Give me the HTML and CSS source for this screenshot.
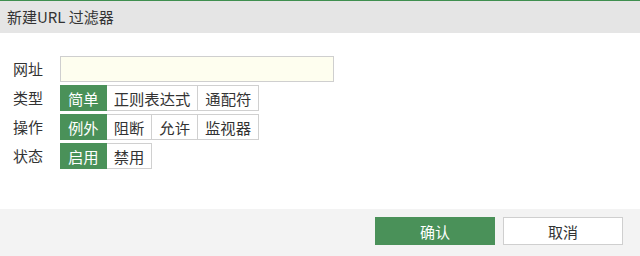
FILE: index.html
```html
<!DOCTYPE html>
<html lang="zh">
<head>
<meta charset="utf-8">
<link rel="stylesheet" href="styles.css">
</head>
<body>
<div class="dialog">
  <div class="header">新建URL 过滤器</div>
  <div class="body">
    <div class="row">
      <div class="label">网址</div>
      <input class="input" type="text">
    </div>
    <div class="row">
      <div class="label">类型</div>
      <div class="group">
        <span class="opt active">简单</span><span class="opt">正则表达式</span><span class="opt">通配符</span>
      </div>
    </div>
    <div class="row">
      <div class="label">操作</div>
      <div class="group">
        <span class="opt active">例外</span><span class="opt">阻断</span><span class="opt">允许</span><span class="opt">监视器</span>
      </div>
    </div>
    <div class="row">
      <div class="label">状态</div>
      <div class="group">
        <span class="opt active">启用</span><span class="opt">禁用</span>
      </div>
    </div>
  </div>
  <div class="footer">
    <button class="btn primary">确认</button>
    <button class="btn">取消</button>
  </div>
</div>
</body>
</html>
```
FILE: styles.css
```css
* { box-sizing: border-box; }
html, body { margin: 0; padding: 0; }
body {
  width: 640px;
  height: 256px;
  font-family: "Noto Sans CJK SC", "Noto Sans", sans-serif;
  font-size: 15px;
  color: #333;
  background: #fff;
  overflow: hidden;
}
.dialog { display: flex; flex-direction: column; height: 256px; }
.header {
  height: 33px;
  border-top: 1px solid #3f8f4f;
  background: #e5e5e5;
  padding: 0 7px;
  line-height: 31px;
  font-size: 15px;
  color: #333;
}
.body {
  flex: 1;
  padding: 23px 0 0 13px;
  display: flex;
  flex-direction: column;
  gap: 3px;
}
.row { display: flex; align-items: center; height: 26px; }
.label { width: 47px; line-height: 26px; }
.input {
  width: 274px;
  height: 26px;
  border: 1px solid #cfcfcf;
  background: #fefeef;
  margin: 0;
  padding: 0 6px;
  outline: none;
}
.group { display: flex; }
.opt {
  height: 26px;
  line-height: 24px;
  font-size: 15.33px;
  padding: 0 7px;
  border: 1px solid #d0d0d0;
  border-left: none;
  background: #fff;
  color: #333;
}
.opt:first-child { border-left: 1px solid #d0d0d0; }
.opt.active {
  background: #4a9159;
  border-color: #4a9159;
  color: #fff;
}
.footer {
  height: 47px;
  background: #f3f3f3;
  display: flex;
  justify-content: flex-end;
  align-items: flex-start;
  padding: 8px 17px 0 0;
  gap: 8px;
}
.btn {
  width: 120px;
  height: 28px;
  border: 1px solid #cfcfcf;
  background: #fff;
  color: #333;
  font-family: inherit;
  font-size: 15px;
  margin: 0;
  padding: 0;
}
.btn.primary {
  background: #4a9159;
  border-color: #4a9159;
  color: #fff;
}
```
